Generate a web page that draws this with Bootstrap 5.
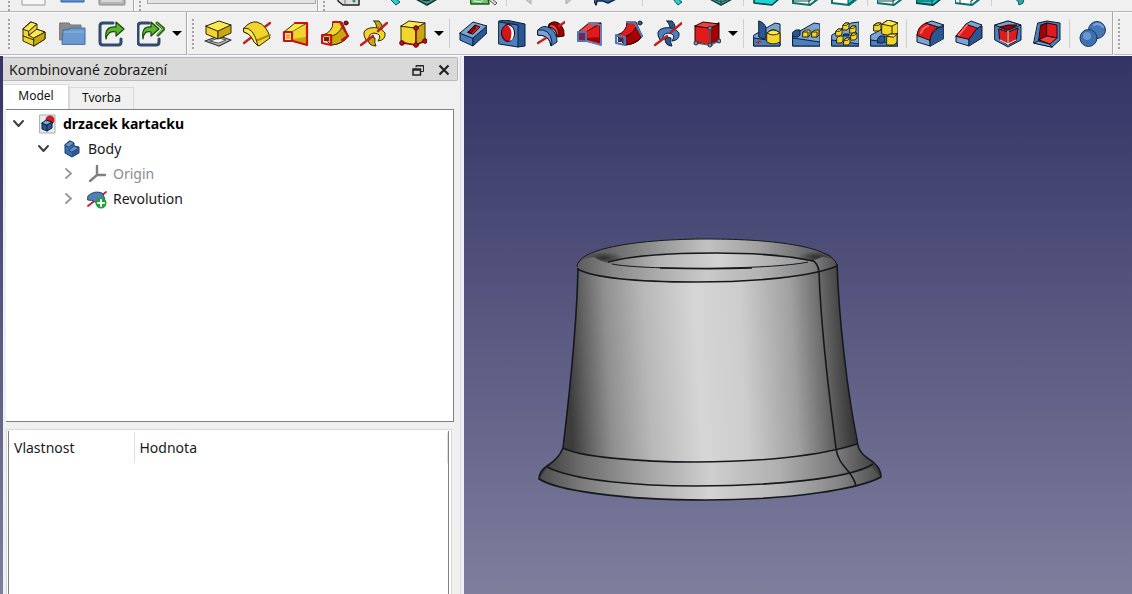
<!DOCTYPE html>
<html lang="cs">
<head>
<meta charset="utf-8">
<meta name="viewport" content="width=device-width, initial-scale=1">
<title>drzacek kartacku</title>
<link rel="stylesheet" href="https://cdn.jsdelivr.net/npm/bootstrap@5.3.0/dist/css/bootstrap.min.css">
<script src="https://cdn.jsdelivr.net/npm/bootstrap@5.3.0/dist/js/bootstrap.bundle.min.js"></script>
<style>
body{font-family:"Noto Sans","Open Sans",sans-serif;font-size:14px;line-height:20px;color:#1a1a1a;background:#f0f0f0}
button.tool,button.drop{background:none;border:0;padding:0;display:flex;align-items:center;justify-content:center;flex:none}
.tool{width:39px}
.tool svg{width:28px;height:28px;stroke-linejoin:round;stroke-linecap:round}
.drop{width:14px}
.drop::before{content:"";border:5px solid transparent;border-top-color:#000;border-bottom:0}
.bar-top{height:12px;border-bottom:1px solid #b4b4b4;padding-left:3px}
.bar-top .tool{align-items:flex-start}
.bar-top .tool svg{height:8px}
.bar-main{height:44px;padding-left:3px;border-bottom:1px solid #fafafa;box-shadow:inset 0 -1px #b9b9cc,inset 0 1px #fafafa}
.bar-main .tool{padding-top:1px}
.strip{display:flex;flex:none}
.strip-end{border-right:1px solid #a8a8a8;box-shadow:1px 0 #fff}
.strip-pad{padding-right:2px}
.strip-far{margin-left:18px}
.grip{width:11px;flex:none;background:radial-gradient(circle,#a4a4a4 1px,transparent 1px) center 0/4px 4px repeat-y}
.bar-main .grip{margin:6px 0 5px}
.split{width:7px;flex:none;background:linear-gradient(#cfcfcf,#cfcfcf) center/1px 100% no-repeat}
.bar-main .split{margin:7px 0}
.bar-top .split{height:6px}
.bench{width:169px;height:4px;margin:0 1px 0 2px;border:1px solid #a8a8a8;border-top:0;border-radius:0;background:#e3e3e3;padding:0;appearance:none}
.workspace{background:linear-gradient(#333365,#7e7e9d);min-height:0}
.dock{width:458px;background:#f0f0f0;margin-left:3px;border-right:1px solid #dcdce4}
.dock-title{height:24px;margin:1px 2px 0 0;padding:2px 0 0 6px;background:#d9d9d9;border:1px solid #b9b9b9;border-left:0;border-radius:0 2px 2px 0}
.dock-title button{background:none;border:0;padding:0;width:26px;display:flex;justify-content:center}
.dock-title h1{font-size:14px;line-height:20px}
.view-tabs{height:28px;padding-left:1px;font-size:12px;align-items:flex-end}
.view-tabs button{border:1px solid #d9d9d9;border-bottom:0;background:#f0f0f0;padding:0 0 2px;width:65px;height:22px;color:#111}
.view-tabs button.active{background:#fff;height:25px;border-left:0}
.tree-box{height:313px;margin:0 6px 0 3px;padding-top:1px;background:#fff;border:1px solid #828282;border-left:0;flex:none}
.tree-line{height:25px;gap:6px;display:flex;align-items:center;white-space:nowrap}
.tree-line svg{width:20px;height:20px;stroke-linejoin:round;stroke-linecap:round;flex:none}
.tree-line svg.arm{width:13px;height:13px;fill:none;stroke:#404040;stroke-width:2}
.tree-line svg.arm.faint{stroke:#9b9b9b}
.lvl0{padding-left:6px}.lvl1{padding-left:31px}.lvl2{padding-left:56px}
.tree-line .arm{margin-right:6px}
.muted-item{color:#8c8c8c}
.prop-box{margin:7px 8px 0 3px;border:1px solid #dadada;border-bottom:0;background:#fff;padding:1px 2px 0 1px;min-height:0}
.prop-inner{border:solid #828282;border-width:0 1px;height:100%;padding-top:2px}
.prop-inner table{width:100%}
.prop-inner th{font-weight:400;height:30px;padding:0 5px;border-right:1px solid #dedede}
.prop-inner th:first-child{width:125px}
.gap-edge{width:3px;background:#f0f0f4;flex:none}
.view3d{min-width:0}
.view3d svg{width:100%;height:100%;display:block}
.Y{fill:#f2d52a;stroke:#302b00}.Yl{fill:#fce94f;stroke:#302b00}.Yd{fill:#c9a710;stroke:#302b00}
.B{fill:#4c7fbd;stroke:#0b1e38}.Bl{fill:#7ba4d3;stroke:#0b1e38}.Bd{fill:#2b5692;stroke:#0b1e38}
.R{fill:#e01b1b;stroke:#280000}.Rl{fill:#f04040;stroke:#280000}.Rd{fill:#a40000;stroke:#280000}
.axis{stroke:#c02020;stroke-width:2.4;fill:none}
.edge{fill:none;stroke:#16191c;stroke-width:1.6}
.edge-thin{stroke-width:1}
</style>
</head>
<body>
<div class="d-flex flex-column vh-100 overflow-hidden">

<header>
<div class="bar-top d-flex overflow-hidden" role="toolbar" aria-label="Soubor">
  <div class="strip strip-end strip-pad"><span class="grip"></span>
    <button class="tool" aria-label="Nový"><svg viewBox="0 0 28 8"><path d="M2-2V5H25V-2" fill="#f6f6f6" stroke="#999"/></svg></button>
    <button class="tool" aria-label="Otevřít"><svg viewBox="0 0 28 8"><path d="M2-2V2H25V-2" fill="#5d8fca" stroke="#3465a4"/></svg></button>
    <button class="tool" aria-label="Uložit"><svg viewBox="0 0 28 8"><path d="M1-2V4Q1 5 2 5H26Q27 5 27 4V-2" fill="#b5b5b5" stroke="#888"/><path d="M4 1H23" stroke="#d8d8d8" stroke-width="2"/></svg></button></div>
  <div class="strip strip-end"><span class="grip"></span><select class="bench" aria-label="Pracovní prostředí"><option></option></select></div>
  <div class="strip"><span class="grip"></span>
    <button class="tool" aria-label="Celé"><svg viewBox="0 0 28 8"><path d="M3-2V1L8 5H24V-2" fill="#ddd" stroke="#222" stroke-width="1.5"/><path d="M10-2V4" stroke="#777"/><circle cx="19" cy="1" r="1.5" fill="#387"/></svg></button>
    <button class="tool" aria-label="Výběr"><svg viewBox="0 0 28 8"><path d="M16-1L22 5L26 2L22-1Z" fill="#2bd0cf" stroke="#056"/></svg></button>
    <button class="tool" aria-label="Styl"><svg viewBox="0 0 28 8"><path d="M1-2L14 5L26-2Z" fill="#3f9b94" stroke="#12332f" stroke-width="1.5"/><path d="M7-2Q13 4 20-2Z" fill="#732a38" stroke="#222"/></svg></button></div>
  <div class="strip strip-far">
    <button class="tool" aria-label="Hranice"><svg viewBox="0 0 28 8"><path d="M0-2L1 4H19L18-2Z" fill="#74c46a" stroke="#175c1c" stroke-width="1.5"/><path d="M4 1L11 2L14-1" stroke="#fff" fill="none"/><path d="M18-1L25 5L27 3L22-1" fill="#ddd" stroke="#555"/></svg></button><span class="split"></span>
    <button class="tool" aria-label="Zpět"><svg viewBox="0 0 28 8"><path d="M9-1L15 4V-1Z" fill="#c8c8c8" stroke="#aaa"/></svg></button>
    <button class="tool" aria-label="Vpřed"><svg viewBox="0 0 28 8"><path d="M11-1V4L17-1Z" fill="#c8c8c8" stroke="#aaa"/></svg></button>
    <button class="tool" aria-label="Odkaz"><svg viewBox="0 0 28 8"><path d="M-1-1L2 5L3 1L9 1L14 3L24-2" fill="#3465a4" stroke="#122a50" stroke-width="1.6"/></svg></button></div>
  <div class="strip ms-2 ps-1"><span class="split me-2"></span>
    <button class="tool" aria-label="Přiblížit"><svg viewBox="0 0 28 8"><path d="M13-1L18 5L22 2L18-1Z" fill="#2bd0cf" stroke="#056"/></svg></button></div>
  <div class="strip ms-2">
    <button class="tool" aria-label="Izometrie"><svg viewBox="0 0 28 8"><path d="M1-2L14 5L27-2Z" fill="#5ba9a2" stroke="#12433f" stroke-width="1.5"/><path d="M14-1V4M6-1L14 2L22-1" stroke="#12433f" fill="none"/></svg></button><span class="split"></span></div>
  <div class="strip">
    <button class="tool" aria-label="Zepředu"><svg viewBox="0 0 28 8"><path d="M1-1L1 3L19 5L27-2Z" fill="#1fd3d1" stroke="#084b49" stroke-width="1.6"/></svg></button>
    <button class="tool" aria-label="Shora"><svg viewBox="0 0 28 8"><path d="M1-1L1 3L18 5L27-2Z" fill="#fff" stroke="#0d7370" stroke-width="2.2"/><path d="M17 1V4M17 1L23-2M1 1H17" stroke="#084b49"/></svg></button>
    <button class="tool" aria-label="Zprava"><svg viewBox="0 0 28 8"><path d="M1-1L1 3L18 5L27-2Z" fill="#fff" stroke="#0d7370" stroke-width="2.2"/><path d="M17 0V4L26-2Z" fill="#1fd3d1" stroke="#084b49"/></svg></button><span class="split"></span>
    <button class="tool" aria-label="Zezadu"><svg viewBox="0 0 28 8"><path d="M0-1L0 3L17 5L26-2Z" fill="#fff" stroke="#0d7370" stroke-width="2.2"/><path d="M16 1V4M16 1L22-2M1 1H16" stroke="#084b49"/></svg></button>
    <button class="tool" aria-label="Zespodu"><svg viewBox="0 0 28 8"><path d="M0-1L0 3L17 5L26-2Z" fill="#1fd3d1" stroke="#084b49" stroke-width="1.8"/><path d="M16 1V4M16 1L22-2M1 1H16" stroke="#084b49"/></svg></button>
    <button class="tool" aria-label="Zleva"><svg viewBox="0 0 28 8"><path d="M0-1L0 3L17 5L26-2Z" fill="#fff" stroke="#0d7370" stroke-width="2.2"/><path d="M5-1V3M16 1V4M16 1L22-2" stroke="#084b49"/></svg></button><span class="split"></span></div>
  <div class="strip ms-1"><button class="tool" aria-label="Měřit"><svg viewBox="0 0 28 8"><path d="M10-1L13 1L14 5L18 3L19-1Z" fill="#2aa9a7" stroke="#0d5b59"/></svg></button></div>
</div>

<div class="bar-main d-flex overflow-hidden" role="toolbar" aria-label="Návrh dílu">
  <div class="strip strip-end strip-pad"><span class="grip"></span>
    <button class="tool" aria-label="Díl"><svg viewBox="0 0 28 28"><path class="Y" d="M3 9L3 21L14 26L25 19V12L16 9V4L11 2Z"/><path class="Yl" d="M3 9L11 2L17 4L9 11ZM9 15L16 9L25 12L14 18Z"/><path class="Yd" d="M14 18L25 12V19L14 26Z"/><path class="Y" d="M9 11L17 4V9L9 15ZM3 16L14 20" /></svg></button>
    <button class="tool" aria-label="Skupina"><svg viewBox="0 0 28 28"><path d="M1 3H10L12 5H22V20H1Z" fill="#8b8b8b" stroke="#777"/><path d="M3 24L4 10Q10 10 12 8H26V24Z" fill="#6c9ad0" stroke="#3f6da6"/><path d="M5 12H25" stroke="#8fb6e0"/></svg></button>
    <button class="tool" aria-label="Vytvořit odkaz"><svg viewBox="0 0 28 28"><path d="M15 3H5Q2 3 2 6V22Q2 25 5 25H20Q23 25 23 22V19" fill="none" stroke="#304b70" stroke-width="3"/><path d="M8 19Q6 6 18 7V2L26 9L18 16V12Q10 10 8 19Z" fill="#5cb531" stroke="#174a05" stroke-width="1.2"/></svg></button>
    <button class="tool" aria-label="Vytvořit odkazy"><svg viewBox="0 0 28 28"><path d="M12 3H4Q1 3 1 6V22Q1 25 4 25H19Q22 25 22 22V19" fill="none" stroke="#304b70" stroke-width="3"/><path d="M6 19Q4 6 14 7V2L22 9L14 16V12Q7 10 6 19Z" fill="#5cb531" stroke="#174a05" stroke-width="1.2"/><path d="M20 3L27 9L21 15" fill="none" stroke="#2f6816" stroke-width="3"/><path d="M20 3L26 9L20 15" fill="none" stroke="#78c54c"/></svg></button>
    <button class="drop" aria-label="Další odkazy"></button></div>
  <div class="strip strip-end"><span class="grip"></span>
    <button class="tool" aria-label="Vysunutí"><svg viewBox="0 0 28 28"><path d="M1 21L15 16L27 20L15 26Z" fill="#bbb" stroke="#333" stroke-width="1.3"/><path d="M6 21L15 18L22 20L15 23Z" fill="#f0f0f0" stroke="#555"/><path class="Y" d="M2 6V14L14 19V11Z"/><path class="Yd" d="M14 11V19L27 13V5Z"/><path class="Yl" d="M2 6L15 1L27 5L14 11Z"/></svg></button>
    <button class="tool" aria-label="Rotace"><svg viewBox="0 0 28 28"><path class="axis" d="M1 23L27 3"/><path class="Y" d="M1 8Q7 1 14 2Q24 5 27 18L16 26L12 23Q8 14 1 12Z"/><path class="Yl" d="M1 8Q11 7 15 26L11 22Q8 14 1 12Z"/><path d="M15 20L27 15" stroke="#a88a08" stroke-width="2"/></svg></button>
    <button class="tool" aria-label="Profilování"><svg viewBox="0 0 28 28"><path class="Yl" d="M2 12L13 3H25L12 12Z"/><path class="Yd" d="M10 12L25 3V25L10 21Z"/><path d="M10 12L24 4V17L10 19Z" fill="#f2d52a"/><path d="M13 3H25V25L11 21M2 12H10V21H2Z" fill="none" stroke="#c61414" stroke-width="2.2"/><path d="M4 14H8V19H4Z" fill="#f0b020"/></svg></button>
    <button class="tool" aria-label="Tažení"><svg viewBox="0 0 28 28"><path class="Y" d="M2 15Q12 12 12 2H21L27 16Q23 24 10 25Z"/><path class="Yd" d="M11 16Q18 14 21 7L27 16Q22 24 11 25Z"/><path d="M12 2H19L27 16L21 20M1 15H10V25L1 23Z" fill="none" stroke="#c61414" stroke-width="2.2"/><path d="M3 17H8V21H3Z" fill="#811"/><circle cx="25" cy="3" r="2" fill="#b01515" stroke="#400"/></svg></button>
    <button class="tool" aria-label="Šroubovice"><svg viewBox="0 0 28 28"><path class="Yd" d="M14 1L19 1Q24 6 21 12L15 13Q19 7 14 1Z"/><path class="Y" d="M6 20Q0 10 10 8Q20 6 25 13Q26 20 18 21Q23 14 14 13Q8 14 9 19Z"/><path class="Yd" d="M8 19Q12 16 15 18Q14 23 16 26Q8 26 8 19Z"/><path class="axis" d="M1 25L13 16M18 11L27 3"/></svg></button>
    <button class="tool" aria-label="Základní těleso"><svg viewBox="0 0 28 28"><path class="Y" d="M2 6V22L17 25V8Z"/><path class="Yd" d="M17 8V25L26 20V3Z"/><path class="Yl" d="M2 6L10 1L26 3L17 8Z"/><path d="M17 8V25L3 23M17 25L26 21" fill="none" stroke="#9d1010" stroke-width="1.5"/><g fill="#c01515" stroke="#500"><circle cx="17" cy="8" r="2.3"/><circle cx="3" cy="23" r="2.3"/><circle cx="17" cy="25" r="2.3"/><circle cx="26" cy="21" r="2.3"/></g></svg></button>
    <button class="drop" aria-label="Další tělesa"></button><span class="split"></span>
    <button class="tool" aria-label="Kapsa"><svg viewBox="0 0 28 28"><path class="B" d="M1 13V20L14 26V18Z"/><path class="Bd" d="M14 18V26L28 13V6Z"/><path class="Bl" d="M1 13L14 2L28 6L14 18Z"/><path class="R" d="M9 12L16 5L21 7L14 14Z"/><path class="Rd" d="M9 12L16 5V9L12 13Z"/></svg></button>
    <button class="tool" aria-label="Díra"><svg viewBox="0 0 28 28"><path class="Bd" d="M1 1L8 0L27 4V26L20 27Z"/><path class="B" d="M1 2L20 5V27L1 24Z"/><ellipse class="Rd" cx="10" cy="13" rx="6.5" ry="8.5"/><path d="M9 5Q16 6 16 13Q16 20 11 21Q15 13 9 5Z" fill="#fff" /><path d="M9 5Q16 9 12 21Q5 20 4 13Q4 7 9 5Z" fill="#cc1818"/></svg></button>
    <button class="tool" aria-label="Drážka"><svg viewBox="0 0 28 28"><path class="Rd" d="M12 4Q18-1 24 5Q28 10 27 16L20 17Q20 8 12 7Z"/><path class="Rl" d="M14 4Q21 5 22 14L20 17Q20 8 12 7Z"/><path class="B" d="M1 10Q6 4 13 8Q20 12 20 22L14 26Q13 15 1 15Z"/><path class="Bl" d="M1 10Q13 8 15 22L14 26Q13 15 1 15Z"/><path class="axis" d="M1 23L9 18M22 6L28 2"/></svg></button>
    <button class="tool" aria-label="Odečtené profilování"><svg viewBox="0 0 28 28"><path class="Rl" d="M2 12L13 3H25L12 12Z"/><path class="Rd" d="M10 12L25 3V25L10 21Z"/><path d="M10 12L23 5V17L10 18Z" fill="#e01b1b"/><path d="M13 3L25 5V25L11 21" fill="none" stroke="#5e83b7" stroke-width="2"/><path d="M2 12H10V21H2Z" fill="#7e244a" stroke="#4779b8" stroke-width="2"/></svg></button>
    <button class="tool" aria-label="Odečtené tažení"><svg viewBox="0 0 28 28"><path class="R" d="M2 15Q12 12 12 2H21L27 16Q23 24 10 25Z"/><path class="Rd" d="M11 16Q18 14 21 7L27 16Q22 24 11 25Z"/><path d="M12 2L20 3L27 16M1 15L10 17V25L1 23Z" fill="none" stroke="#4779b8" stroke-width="2.2"/><path d="M3 18H8V22H3Z" fill="#1d3a68"/><circle cx="25" cy="3" r="2" fill="#3c587e" stroke="#123"/></svg></button>
    <button class="tool" aria-label="Odečtená šroubovice"><svg viewBox="0 0 28 28"><path class="Bd" d="M13 1L18 1Q23 6 20 12L15 13Q18 7 13 1Z"/><path class="B" d="M6 20Q0 10 10 8Q20 6 25 13Q26 20 18 21Q23 14 14 13Q8 14 9 19Z"/><path class="Bd" d="M11 19Q14 16 17 18Q16 23 18 26Q11 26 11 19Z"/><path class="axis" d="M1 25L13 16M17 12L28 3"/></svg></button>
    <button class="tool" aria-label="Odečtené těleso"><svg viewBox="0 0 28 28"><path class="R" d="M2 6V22L17 25V8Z"/><path class="Rd" d="M17 8V25L26 20V3Z"/><path class="Rl" d="M2 6L10 2L26 4L17 8Z"/><path d="M17 8V25L3 23M17 25L26 21" fill="none" stroke="#567" stroke-width="1.5"/><g fill="#7690ae" stroke="#234"><circle cx="17" cy="8" r="2"/><circle cx="3" cy="23" r="2"/><circle cx="17" cy="25" r="2"/><circle cx="26" cy="21" r="2"/></g></svg></button>
    <button class="drop" aria-label="Další odečtená tělesa"></button><span class="split"></span>
    <button class="tool" aria-label="Zrcadlení"><svg viewBox="0 0 28 28"><path class="Bl" d="M1 15L22 3L27 4V26H1Z"/><path class="B" d="M1 18L27 22V26H1Z"/><path class="Bd" d="M6 1Q12 3 13 8V18Q9 20 6 17Z"/><path class="Y" d="M14 13Q20 6 27 13V22Q20 26 14 22Z"/><path class="Yl" d="M14 13Q20 7 27 13Q20 17 14 13Z"/><path d="M3 22L6 24L5 21L8 22" fill="none" stroke="#c11"/></svg></button>
    <button class="tool" aria-label="Lineární pole"><svg viewBox="0 0 28 28"><path class="Bl" d="M1 15L22 3L28 4V26H1Z"/><path class="B" d="M1 18L28 22V26H1Z"/><path class="Bd" d="M1 12L4 10H8V15L6 17H1Z"/><path class="Y" d="M11 12L14 10H18V15L16 17H11ZM20 12L23 10H27V15L25 17H20Z"/><path d="M11 12H16V17M20 12H25V17" fill="none" stroke="#302b00"/></svg></button>
    <button class="tool" aria-label="Kruhové pole"><svg viewBox="0 0 28 28"><path class="Bl" d="M1 15L20 3L28 2V26H1Z"/><path class="B" d="M1 20L28 24V26H1Z"/><g class="Y"><path d="M12 5L14 3H18V8L16 10H12ZM19 8L21 6H25V11L23 13H19ZM5 11L7 9H11V14L9 16H5ZM20 15L22 13H26V18L24 20H20ZM6 18L8 16H12V21L10 23H6ZM13 20L15 18H19V23L17 25H13Z"/></g><path class="Yl" d="M12 5L14 3H18L16 5ZM19 8L21 6H25L23 8ZM5 11L7 9H11L9 11ZM20 15L22 13H26L24 15ZM13 20L15 18H19L17 20Z"/><path class="Bd" d="M13 14H18V16H13Z"/></svg></button>
    <button class="tool" aria-label="Vícenásobná transformace"><svg viewBox="0 0 28 28"><path class="Bl" d="M1 15L20 5L28 14V26H1Z"/><path class="B" d="M1 20L28 24V26H1Z"/><path class="Y" d="M12 4L18 0L28 3V13L22 16L12 14Z"/><path class="Yl" d="M12 4L18 0L28 3L22 6Z"/><path d="M22 6V16" stroke="#302b00"/><path class="Y" d="M4 5L7 3H11V9L9 11H4ZM17 16L20 14H27V22L24 25H17Z"/><path class="Yl" d="M4 5L7 3H11L9 5ZM17 16L20 14H27L24 17Z"/><path class="Bd" d="M8 18L10 16H15V21L13 23H8Z"/></svg></button><span class="split"></span>
    <button class="tool" aria-label="Zaoblení"><svg viewBox="0 0 28 28"><path class="Bl" d="M1 15V22L14 26V19Z"/><path class="Bd" d="M14 26V19Q16 9 28 6V18Z"/><path class="R" d="M1 15Q2 6 10 3L23 7Q15 10 14 20Z"/><path d="M5 13Q7 7 12 6" fill="none" stroke="#fa6767" stroke-width="2"/><path class="Bl" d="M10 3L16 1L28 5L23 7Z"/></svg></button>
    <button class="tool" aria-label="Zkosení"><svg viewBox="0 0 28 28"><path class="Bl" d="M1 16V22L14 26V19Z"/><path class="Bd" d="M14 19V26L27 18V6L22 8Z"/><path class="R" d="M1 16L11 4L23 7L14 19Z"/><path class="Bl" d="M11 4L16 1L27 5L23 8Z"/><path d="M4 15L12 5" stroke="#ff6464" stroke-width="2"/></svg></button>
    <button class="tool" aria-label="Úkos"><svg viewBox="0 0 28 28"><path class="B" d="M1 5L14 1L27 5V20L14 27L1 20Z"/><path class="Bl" d="M1 5L14 1L27 5L14 10Z"/><path class="R" d="M5 9L14 12V25L6 20ZM14 12L24 8L22 21L14 25Z"/><path d="M14 11V25M6 20L14 24L22 20" fill="none" stroke="#fff"/><path class="Rd" d="M6 7L14 5H23L14 10Z"/></svg></button>
    <button class="tool" aria-label="Tloušťka"><svg viewBox="0 0 28 28"><path class="B" d="M5 3L14 1L27 3V20L19 27L1 23Z"/><path class="Bl" d="M1 23L5 21L16 24L19 27Z"/><path class="Rd" d="M8 5L14 3V16L6 20Z"/><path class="R" d="M14 3L24 5V18L14 16Z"/><path class="Rl" d="M14 16L24 18L17 24L6 20Z"/></svg></button><span class="split"></span>
    <button class="tool" aria-label="Booleovská operace"><svg viewBox="0 0 28 28"><circle cx="18" cy="10" r="8.5" fill="#4676b3" stroke="#1a3965"/><path d="M15 5Q20 2 24 7" fill="none" stroke="#7ba5d8" stroke-width="2"/><circle cx="9.5" cy="18" r="8.5" fill="#3d70b0" stroke="#1a3965"/><circle cx="8" cy="16" r="4" fill="#6997ce"/></svg></button></div>
  <div class="strip"><span class="grip"></span></div>
</div>
</header>

<main class="workspace d-flex flex-grow-1">
  <aside class="dock d-flex flex-column flex-shrink-0">
    <div class="dock-title d-flex align-items-center flex-shrink-0">
      <h1 class="m-0 me-auto fw-normal">Kombinované zobrazení</h1>
      <button aria-label="Odpojit panel"><svg width="12" height="12" fill="none" stroke="#222"><path d="M4 3.5V1.5H11.5V7.5H9M4 2H11.5"/><path d="M1 5H8.5V11H1ZM1 6H8.5" stroke-width="1.5"/></svg></button>
      <button aria-label="Zavřít panel"><svg width="12" height="12"><path d="M1.5 1.5L10.5 10.5M10.5 1.5L1.5 10.5" stroke="#222" stroke-width="2.2"/></svg></button>
    </div>
    <div class="view-tabs d-flex flex-shrink-0" role="tablist">
      <button class="active" role="tab" aria-selected="true">Model</button>
      <button role="tab" aria-selected="false">Tvorba</button>
    </div>
    <div class="tree-box" role="tree">
      <div class="tree-line lvl0 fw-bold text-black" role="treeitem"><svg class="arm" viewBox="0 0 13 13"><path d="M2 4L6.5 9L11 4"/></svg><svg viewBox="0 0 20 20"><path d="M3 1H18V19H3Z" fill="#e8eaee" stroke="#a5abb5"/><circle cx="13" cy="6" r="4.5" fill="#c81e24"/><path class="Bd" d="M5 9V15L10 17L15 14V8L10 11Z"/><path class="Bl" d="M5 9L9 6L15 8L10 11Z"/><path d="M10 11V17" stroke="#0b1e38"/></svg><span>drzacek kartacku</span></div>
      <div class="tree-line lvl1" role="treeitem"><svg class="arm" viewBox="0 0 13 13"><path d="M2 4L6.5 9L11 4"/></svg><svg viewBox="0 0 20 20"><path d="M3 6V14L10 18L17 14V8L12 7V4L8 2Z" fill="#3b6eae" stroke="#173a68"/><path d="M3 6L8 2L12 4L7 8ZM7 11L12 7L17 9L10 13Z" fill="#6492c8" stroke="#173a68" stroke-width=".8"/><path d="M10 13L17 9V14L10 18Z" fill="#2b5692"/></svg><span>Body</span></div>
      <div class="tree-line lvl2" role="treeitem"><svg class="arm faint" viewBox="0 0 13 13"><path d="M4 2L9 6.5L4 11"/></svg><svg viewBox="0 0 20 20"><path d="M10 2V11L3 17M10 11H18" stroke="#808080" stroke-width="2.4" fill="none"/></svg><span class="muted-item">Origin</span></div>
      <div class="tree-line lvl2" role="treeitem"><svg class="arm faint" viewBox="0 0 13 13"><path d="M4 2L9 6.5L4 11"/></svg><svg viewBox="0 0 20 20"><path d="M1 17L19 3" stroke="#c02030" stroke-width="1.8"/><path d="M1 7Q7 1 15 4Q18 8 18 13L11 17Q9 11 1 11Z" fill="#5380b5" stroke="#27466e"/><circle cx="14" cy="14" r="5.5" fill="#1fa03a"/><path d="M14 11V17M11 14H17" stroke="#fff" stroke-width="2"/></svg><span>Revolution</span></div>
    </div>
    <div class="prop-box flex-grow-1"><div class="prop-inner">
      <table><thead><tr><th scope="col">Vlastnost</th><th scope="col">Hodnota</th></tr></thead></table>
    </div></div>
  </aside>
  <div class="gap-edge"></div>
  <section class="view3d flex-grow-1" aria-label="3D pohled">
    <svg viewBox="464 56 668 538" preserveAspectRatio="xMidYMid slice">
      <defs>
        <linearGradient id="side" gradientUnits="userSpaceOnUse" x1="568" y1="360" x2="850" y2="345">
          <stop offset="0" stop-color="#3c3c3c"/><stop offset=".06" stop-color="#626262"/><stop offset=".14" stop-color="#8f8f8f"/><stop offset=".28" stop-color="#b8b8b8"/><stop offset=".46" stop-color="#d6d6d6"/><stop offset=".62" stop-color="#cdcdcd"/><stop offset=".8" stop-color="#a0a0a0"/><stop offset=".9" stop-color="#6c6c6c"/><stop offset="1" stop-color="#343434"/>
        </linearGradient>
        <linearGradient id="foot" gradientUnits="userSpaceOnUse" x1="540" y1="0" x2="881" y2="0">
          <stop offset="0" stop-color="#3a3a3a"/><stop offset=".12" stop-color="#6c6c6c"/><stop offset=".3" stop-color="#a0a0a0"/><stop offset=".5" stop-color="#cfcfcf"/><stop offset=".7" stop-color="#b0b0b0"/><stop offset=".88" stop-color="#777"/><stop offset="1" stop-color="#383838"/>
        </linearGradient>
        <linearGradient id="rim" gradientUnits="userSpaceOnUse" x1="577" y1="0" x2="837" y2="0">
          <stop offset="0" stop-color="#555"/><stop offset=".12" stop-color="#666"/><stop offset=".3" stop-color="#929292"/><stop offset=".5" stop-color="#c2c2c2"/><stop offset=".7" stop-color="#a0a0a0"/><stop offset=".88" stop-color="#6c6c6c"/><stop offset="1" stop-color="#505050"/>
        </linearGradient>
        <linearGradient id="lip" gradientUnits="userSpaceOnUse" x1="577" y1="0" x2="837" y2="0">
          <stop offset="0" stop-color="#5a5a5a"/><stop offset=".14" stop-color="#888"/><stop offset=".3" stop-color="#aaa"/><stop offset=".5" stop-color="#cacaca"/><stop offset=".7" stop-color="#b4b4b4"/><stop offset=".9" stop-color="#848484"/><stop offset="1" stop-color="#505050"/>
        </linearGradient>
        <linearGradient id="bore" gradientUnits="userSpaceOnUse" x1="608" y1="0" x2="812" y2="0">
          <stop offset="0" stop-color="#777"/><stop offset=".25" stop-color="#b5b5b5"/><stop offset=".55" stop-color="#d4d4d4"/><stop offset="1" stop-color="#939393"/>
        </linearGradient>
        <radialGradient id="shade"><stop offset="0" stop-color="#222" stop-opacity=".8"/><stop offset="1" stop-color="#222" stop-opacity="0"/></radialGradient>
      </defs>
      <path d="M563 446C560 456 555 461 547 466C541 470 539 474 539 479C556 490 620 500 705 500C790 500 860 489 881 477C881 470 878 466 873 462C864 456 858 452 857 440Z" fill="url(#foot)"/>
      <path d="M540 478C560 492 640 499 705 499C790 499 860 488 880 476L872 467C840 481 770 486 700 486C630 486 575 480 547 468Z" fill="#fff" opacity=".1"/>
      <path d="M578 262C577 320 570 390 563 448C580 457 640 462 695 462C760 462 820 456 857 444C847 390 839 320 837 262Z" fill="url(#side)"/>
      <path d="M577 267C577 248 640 239 708 239C775 239 835 247 837 266C815 277 760 282 695 282C640 282 593 278 577 267Z" fill="url(#rim)"/>
      <ellipse cx="604" cy="258" rx="20" ry="6" fill="url(#shade)"/><ellipse cx="816" cy="257" rx="18" ry="6" fill="url(#shade)"/>
      <path d="M577 268C578 262 584 258 594 257C605 266 640 269 706 269C760 269 805 266 822 257C832 258 836 262 837 266C810 277 755 282 695 282C640 282 595 278 577 268Z" fill="url(#lip)"/>
      <path d="M608 263C630 256 665 253 715 253C760 253 790 256 813 261C790 266 750 269 706 269C660 269 630 267 608 263Z" fill="url(#bore)"/>
      <path class="edge edge-thin" d="M577 267C577 248 640 239 708 239C775 239 835 247 837 266M612 264C640 270 770 270 808 262"/>
      <path class="edge" d="M608 262C630 256 665 253 715 253C760 253 790 256 813 261M660 268C690 269 725 269 752 268"/>
      <path class="edge" d="M577 269C595 278 640 282 695 282C755 282 810 277 837 266"/>
      <path class="edge" d="M563 448C580 457 640 462 695 462C760 462 820 456 857 444"/>
      <path class="edge" d="M547 467C575 481 640 486 695 486C770 486 850 479 873 464"/>
      <path class="edge" d="M578 268C577 320 570 390 563 448C560 456 555 461 547 466C541 470 539 474 539 479C556 490 620 500 705 500C790 500 860 489 881 477C881 470 878 466 873 462C864 456 858 452 857 440C847 390 839 320 837 264"/>
      <path class="edge" d="M812 260Q818 263 819 272C821 330 829 395 836 448C838 467 853 470 856 486"/>
    </svg>
  </section>
</main>
</div>
</body>
</html>
